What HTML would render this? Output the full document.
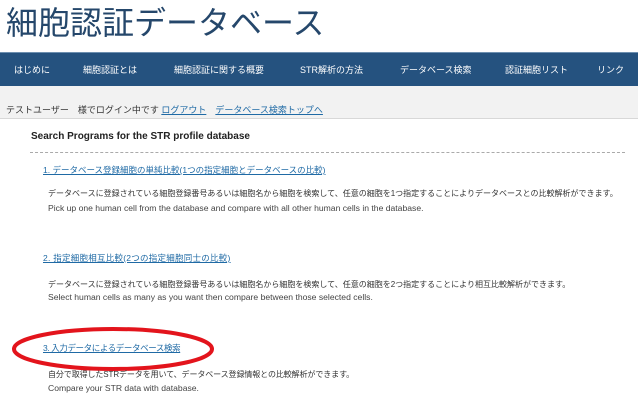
<!DOCTYPE html><html><head><meta charset="utf-8"><style>
body{margin:0;width:638px;height:400px;overflow:hidden;background:#fff;font-family:"Liberation Sans","Noto Sans CJK JP",sans-serif;position:relative}
.a{position:absolute;white-space:nowrap}
h1{position:absolute;left:6px;top:-2px;margin:0;font-weight:normal;font-size:32px;color:#25476b;font-family:"Noto Sans CJK JP",sans-serif}
.nav{position:absolute;left:0;top:52px;width:638px;height:33px;background:#25527f;border-top:1px solid #6d8fb0}
.nav span{position:absolute;top:10px;color:#fff;font-size:9px}
.gray{position:absolute;left:0;top:86px;width:638px;height:32px;background:#f2f2f2;border-bottom:1px solid #d8d8d8}
a{color:#1f6aa5;text-decoration:underline}
.t{font-size:8px;color:#333}
.e{font-size:8.6px;color:#444}
</style></head><body>
<h1>細胞認証データベース</h1>
<div class="nav">
<span style="left:14px">はじめに</span>
<span style="left:83px">細胞認証とは</span>
<span style="left:174px">細胞認証に関する概要</span>
<span style="left:300px">STR解析の方法</span>
<span style="left:400px">データベース検索</span>
<span style="left:505px">認証細胞リスト</span>
<span style="left:597px">リンク</span>
</div>
<div class="gray"><div class="a" style="left:6px;top:17px;font-size:9px;color:#333">テストユーザー　様でログイン中です <a>ログアウト</a>　<a>データベース検索トップへ</a></div></div>
<div class="a" style="left:31px;top:131px;font-size:10px;font-weight:bold;color:#222">Search Programs for the STR profile database</div>
<div class="a" style="left:30px;top:152px;width:595px;border-top:1px dashed #aaa"></div>
<div class="a" style="left:43px;top:164px;font-size:8.5px"><a>1. データベース登録細胞の単純比較(1つの指定細胞とデータベースの比較)</a></div>
<div class="a t" style="left:48px;top:188px">データベースに登録されている細胞登録番号あるいは細胞名から細胞を検索して、任意の細胞を1つ指定することによりデータベースとの比較解析ができます。</div>
<div class="a e" style="left:48px;top:203px">Pick up one human cell from the database and compare with all other human cells in the database.</div>
<div class="a" style="left:43px;top:252px;font-size:8.5px;letter-spacing:0.25px"><a>2. 指定細胞相互比較(2つの指定細胞同士の比較)</a></div>
<div class="a t" style="left:48px;top:279px">データベースに登録されている細胞登録番号あるいは細胞名から細胞を検索して、任意の細胞を2つ指定することにより相互比較解析ができます。</div>
<div class="a e" style="left:48px;top:292px">Select human cells as many as you want then compare between those selected cells.</div>
<div class="a" style="left:43px;top:342px;font-size:8.5px;letter-spacing:-0.4px"><a>3. 入力データによるデータベース検索</a></div>
<svg class="a" style="left:0;top:320px" width="240" height="60"><ellipse cx="113" cy="29" rx="99" ry="20" fill="none" stroke="#e3141c" stroke-width="4"/></svg>
<div class="a t" style="left:48px;top:369px;letter-spacing:-0.1px">自分で取得したSTRデータを用いて、データベース登録情報との比較解析ができます。</div>
<div class="a e" style="left:48px;top:383px">Compare your STR data with database.</div>
</body></html>
